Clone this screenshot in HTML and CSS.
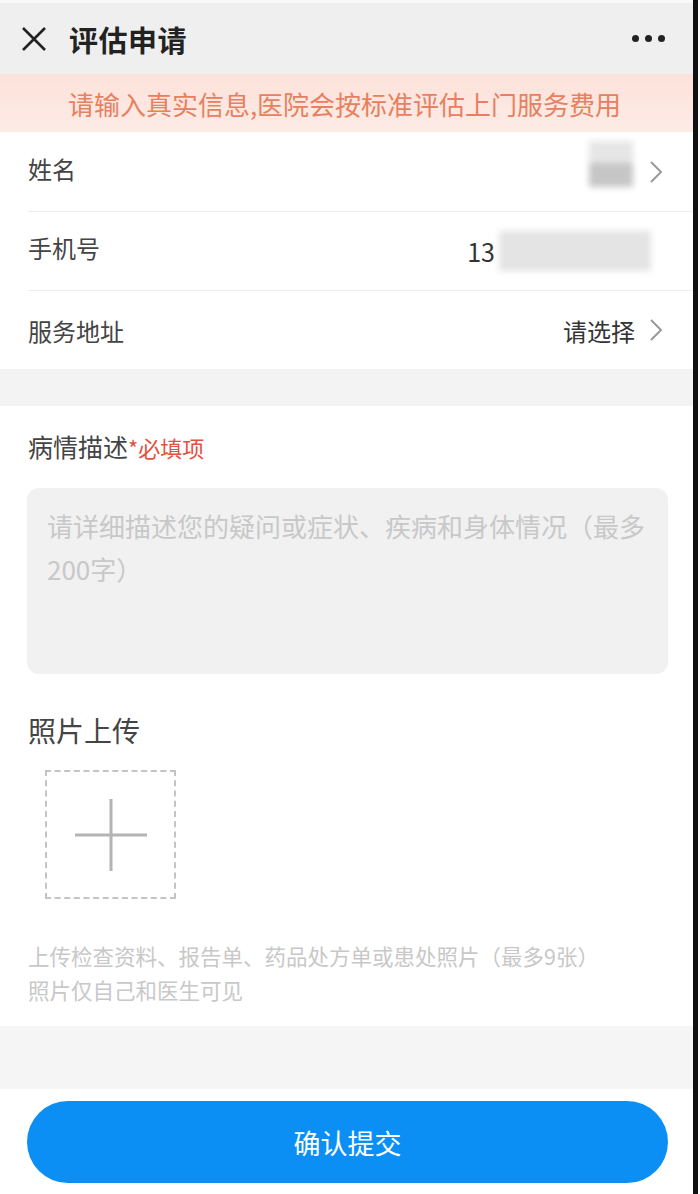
FILE: index.html
```html
<!DOCTYPE html>
<html lang="zh-CN">
<head>
<meta charset="utf-8">
<title>评估申请</title>
<link rel="stylesheet" href="styles.css">
</head>
<body>
<div class="frame">
  <header class="topbar">
    <svg class="close" width="26" height="26" viewBox="0 0 26 26"><path d="M2 2 L24 24 M24 2 L2 24" stroke="#222" stroke-width="2.6" fill="none"/></svg>
    <h1 class="title">评估申请</h1>
    <div class="more"><i></i><i></i><i></i></div>
  </header>
  <div class="notice">请输入真实信息,医院会按标准评估上门服务费用</div>

  <div class="list">
    <div class="row">
      <span class="label">姓名</span>
      <span class="value"><span class="blur blur-name"></span></span>
      <svg class="chev" width="14" height="24" viewBox="0 0 14 24"><path d="M2 2 L12 12 L2 22" stroke="#999" stroke-width="2" fill="none"/></svg>
    </div>
    <div class="row">
      <span class="label">手机号</span>
      <span class="value phone">13<span class="blur blur-phone"></span></span>
    </div>
    <div class="row">
      <span class="label">服务地址</span>
      <span class="value select">请选择</span>
      <svg class="chev" width="14" height="24" viewBox="0 0 14 24"><path d="M2 2 L12 12 L2 22" stroke="#999" stroke-width="2" fill="none"/></svg>
    </div>
  </div>

  <div class="gap"></div>

  <section class="form">
    <div class="sec-title">病情描述<span class="req">*必填项</span></div>
    <div class="textarea">请详细描述您的疑问或症状、疾病和身体情况（最多200字）</div>

    <div class="photo-title">照片上传</div>
    <div class="upload">
      <svg width="76" height="76" viewBox="0 0 76 76"><path d="M38 2 V74 M2 38 H74" stroke="#b4b4b4" stroke-width="3" fill="none"/></svg>
    </div>
    <p class="hint">上传检查资料、报告单、药品处方单或患处照片（最多9张）<br>照片仅自己和医生可见</p>
  </section>

  <div class="gap gap-bottom"></div>

  <footer class="footer">
    <button class="submit">确认提交</button>
  </footer>
</div>
</body>
</html>
```

FILE: styles.css
```css
* { box-sizing: border-box; }
html, body { margin: 0; padding: 0; background: #fff; }
body {
  font-family: "Noto Sans CJK SC", "Noto Sans", sans-serif;
  width: 700px;
  height: 1194px;
  overflow: hidden;
}
.frame {
  width: 698px;
  height: 1194px;
  border-right: 5px solid #111;
  background: #fff;
  display: flex;
  flex-direction: column;
}
.topbar {
  height: 74px;
  background: #efefef;
  border-top: 3px solid #f8f8f8;
  display: flex;
  align-items: center;
  padding: 0 28px 0 21px;
}
.close { flex: none; }
.title {
  margin: 0 0 0 22px;
  font-size: 29px;
  font-weight: 700;
  color: #222;
  flex: 1;
  letter-spacing: 0.5px;
}
.more { display: flex; gap: 6px; }
.more i { width: 7px; height: 7px; border-radius: 50%; background: #222; display: block; }

.notice {
  height: 58px;
  background: linear-gradient(#fde2da, #fdebe6);
  color: #e8805f;
  font-size: 26px;
  display: flex;
  align-items: center;
  justify-content: center;
  padding-right: 4px;
}

.list { background: #fff; }
.row {
  height: 79px;
  display: flex;
  align-items: center;
  padding: 0 30px 0 28px;
  position: relative;
}
.row + .row { border-top: 1px solid #eee; margin-left: 28px; padding-left: 0; }
.row:first-child .label { position: relative; top: -3px; }
.row:nth-child(2) .label { position: relative; top: -4px; }
.label { font-size: 24px; color: #444; flex: 1; }
.value { font-size: 24px; color: #444; display: flex; align-items: center; }
.chev { margin-left: 14px; }
.blur { display: block; background: #d9d9d9; filter: blur(3px); }
.blur-name { width: 44px; height: 46px; background: linear-gradient(#e6e6e6 48%, #c6c6c6 48%); margin-right: 2px; position: relative; top: -8px; }
.phone { margin-right: 12px; font-size: 25px; color: #333; }
.blur-phone { width: 152px; height: 40px; background: #e4e4e4; margin-left: 4px; }
.select { color: #333; }

.gap { height: 37px; background: #f3f3f3; }

.form { padding: 22px 0 0 28px; flex: none; height: 620px; }
.sec-title { font-size: 25px; color: #444; line-height: 36px; }
.req { color: #e2523f; font-size: 22px; }
.textarea {
  margin-top: 23px;
  width: 641px;
  height: 186px;
  margin-left: -1px;
  background: #f1f1f1;
  border-radius: 12px;
  padding: 16px 20px;
  font-size: 26px;
  line-height: 43px;
  color: #c8c8c8;
}
.photo-title { margin-top: 36px; font-size: 28px; color: #444; line-height: 40px; }
.upload {
  margin: 20px 0 0 17px;
  width: 131px;
  height: 129px;
  border: 2px dashed #c4c4c4;
  display: flex;
  align-items: center;
  justify-content: center;
}
.hint {
  margin: 40px 0 0;
  font-size: 21.5px;
  line-height: 34px;
  color: #c8c8c8;
}

.gap-bottom { height: 63px; background: #f5f5f5; }

.footer { flex: 1; padding: 12px 25px 0 27px; }
.submit {
  width: 641px;
  height: 82px;
  border: none;
  border-radius: 41px;
  background: #0b8ff4;
  color: #fff;
  font-family: inherit;
  font-size: 27px;
}
```
